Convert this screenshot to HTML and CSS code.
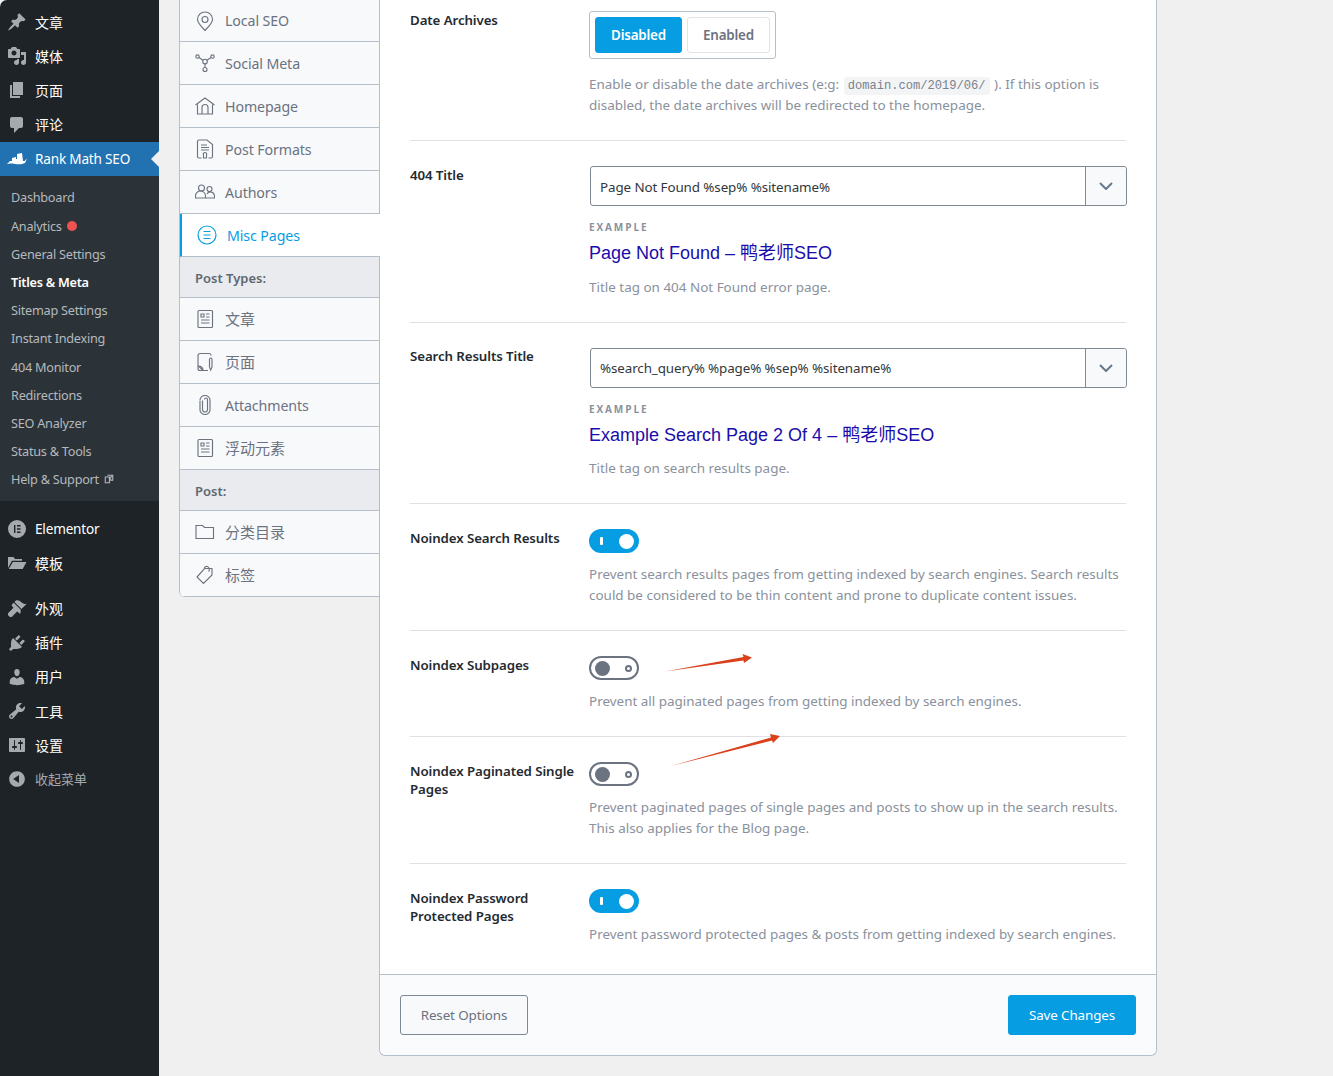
FILE: index.html
```html
<!DOCTYPE html>
<html lang="zh-CN">
<head>
<meta charset="utf-8">
<title>Titles &amp; Meta</title>
<link rel="stylesheet" href="styles.css">
</head>
<body>
<div class="app">
  <nav class="sidebar">
    <ul class="menu">
      <li class="item"><svg class="dash" viewBox="0 0 20 20"><path d="M10.44 3.02l1.82-1.82 6.36 6.35-1.83 1.82c-1.05-.68-2.48-.57-3.41.36l-.75.75c-.92.93-1.04 2.35-.35 3.41l-1.83 1.82-2.41-2.41-2.8 2.79c-.42.42-3.38 2.71-3.8 2.29s1.86-3.39 2.28-3.81l2.79-2.79L4.1 9.36l1.83-1.82c1.05.69 2.48.57 3.4-.36l.75-.75c.93-.92 1.05-2.35.36-3.41z"/></svg><span class="cjk">文章</span></li>
      <li class="item"><svg class="dash" viewBox="0 0 20 20"><path d="M13 11V4c0-.55-.45-1-1-1h-1.67L9 1H5L3.67 3H2c-.55 0-1 .45-1 1v7c0 .55.45 1 1 1h10c.55 0 1-.45 1-1zM7 4.5c1.38 0 2.5 1.12 2.5 2.5S8.38 9.5 7 9.5 4.5 8.38 4.5 7 5.62 4.5 7 4.5zM14 6h5v10.5c0 1.38-1.12 2.5-2.5 2.5S14 17.88 14 16.5s1.12-2.5 2.5-2.5c.17 0 .34.02.5.05V9h-3V6zm-4 8.05V13h2v3.5c0 1.38-1.12 2.5-2.5 2.5S7 17.88 7 16.5 8.12 14 9.5 14c.17 0 .34.02.5.05z"/></svg><span class="cjk">媒体</span></li>
      <li class="item"><svg class="dash" viewBox="0 0 20 20"><path d="M6 15V2h10v13H6zm-1 1h8v2H3V5h2v11z"/></svg><span class="cjk">页面</span></li>
      <li class="item"><svg class="dash" viewBox="0 0 20 20"><path d="M5 2h9c1.1 0 2 .9 2 2v7c0 1.1-.9 2-2 2h-2l-5 5v-5H5c-1.1 0-2-.9-2-2V4c0-1.1.9-2 2-2z"/></svg><span class="cjk">评论</span></li>
      <li class="item item-active"><svg class="dash dash-white" viewBox="0 0 20 20"><path d="M0 15l3-3h2V9l4-1v2h1V5l5-1 1 8h1.500L20 9.500 18 14c-5 2.500-10 .5-14 .5-1.500 0-3 .5-4 .5z"/></svg><span>Rank Math SEO</span></li>
    </ul>
    <ul class="submenu">
      <li>Dashboard</li>
      <li>Analytics<i class="dot"></i></li>
      <li>General Settings</li>
      <li class="sub-current">Titles &amp; Meta</li>
      <li>Sitemap Settings</li>
      <li>Instant Indexing</li>
      <li>404 Monitor</li>
      <li>Redirections</li>
      <li>SEO Analyzer</li>
      <li>Status &amp; Tools</li>
      <li>Help &amp; Support<svg class="ext" viewBox="0 0 12 12"><path d="M1.5 3.5h5v7h-5z M4 1.5h6.500v6H8V5.500M6 6l4-4M7.500 1.500h3v3"/></svg></li>
    </ul>
    <ul class="menu menu-gap">
      <li class="item"><svg class="dash" viewBox="0 0 20 20"><path fill-rule="evenodd" d="M10 1a9 9 0 1 1 0 18 9 9 0 0 1 0-18zM7 6v8h1.400V6zm3 0v1.500h3.500V6zm0 3.250v1.500h3.500v-1.500zm0 3.250V14h3.500v-1.500z"/></svg><span class="latin">Elementor</span></li>
      <li class="item"><svg class="dash" viewBox="0 0 20 20"><path d="M1 4h5.500l1.500 2h7v1.800H5L1 15zM5.800 9H19.500l-3.800 7H1.800z"/></svg><span class="cjk">模板</span></li>
    </ul>
    <ul class="menu menu-gap">
      <li class="item"><svg class="dash" viewBox="0 0 20 20"><path d="M14.480 11.060L7.410 3.990l1.500-1.500c.5-.56 2.300-.47 3.510.32 1.210.8 1.430 1.280 2.910 2.100 1.180.64 2.450 1.260 4.450.85zm-.71.71L6.700 4.700 4.930 6.470c-.39.39-.39 1.020 0 1.410l1.060 1.060c.39.39.39 1.030 0 1.420L1.500 14.800c-.8.800-.8 2.100 0 2.900l.8.800c.8.800 2.100.8 2.900 0l4.400-4.400c.39-.39 1.030-.39 1.420 0l1.060 1.060c.39.39 1.020.39 1.410 0z"/></svg><span class="cjk">外观</span></li>
      <li class="item"><svg class="dash" viewBox="0 0 20 20"><path d="M13.110 4.360L9.870 7.600 8 5.730l3.240-3.240c.35-.34 1.050-.2 1.560.32.520.51.660 1.210.310 1.550zm-8 1.770l.91-1.120 9.010 9.010-1.190.84c-.71.71-2.630 1.160-3.820 1.160H6.140L4.900 17.260c-.59.59-1.540.59-2.120 0-.59-.58-.59-1.530 0-2.120l1.240-1.240v-3.880c0-1.130.4-3.190 1.090-3.890zm7.260 3.970l3.240-3.240c.34-.35 1.040-.21 1.550.31.520.51.660 1.210.310 1.550l-3.240 3.250z"/></svg><span class="cjk">插件</span></li>
      <li class="item"><svg class="dash" viewBox="0 0 20 20"><path d="M10 9.250c-2.270 0-2.730-3.440-2.730-3.440C7 4.020 7.820 2 9.970 2c2.160 0 2.980 2.020 2.710 3.810 0 0-.41 3.440-2.680 3.440zm0 2.570L12.720 10c2.390 0 4.520 2.330 4.520 4.530v2.490s-3.650 1.130-7.240 1.130c-3.650 0-7.240-1.130-7.240-1.130v-2.490c0-2.250 1.940-4.480 4.470-4.480z"/></svg><span class="cjk">用户</span></li>
      <li class="item"><svg class="dash" viewBox="0 0 20 20"><path d="M16.680 9.770c-1.340 1.340-3.300 1.670-4.950.99l-5.410 6.520c-.99.99-2.590.99-3.580 0s-.99-2.590 0-3.570l6.520-5.420c-.68-1.650-.35-3.610.99-4.950 1.280-1.280 3.120-1.620 4.720-1.060l-2.890 2.890 2.820 2.820 2.860-2.870c.53 1.580.18 3.390-1.080 4.670zM3.810 16.210c.4.390 1.040.39 1.430 0 .4-.4.4-1.040 0-1.430-.39-.4-1.030-.4-1.430 0-.39.39-.39 1.030 0 1.430z"/></svg><span class="cjk">工具</span></li>
      <li class="item"><svg class="dash" viewBox="0 0 20 20"><path d="M18 16V4c0-.55-.45-1-1-1H3c-.55 0-1 .45-1 1v12c0 .55.45 1 1 1h14c.55 0 1-.45 1-1zM8 11h1c.55 0 1 .45 1 1s-.45 1-1 1H8v1.500c0 .28-.22.5-.5.5s-.5-.22-.5-.5V13H6c-.55 0-1-.45-1-1s.45-1 1-1h1V5.500c0-.28.22-.5.5-.5s.5.22.5.5V11zm5-2h-1c-.55 0-1-.45-1-1s.45-1 1-1h1V5.500c0-.28.22-.5.5-.5s.5.22.5.5V7h1c.55 0 1 .45 1 1s-.45 1-1 1h-1v5.500c0 .28-.22.5-.5.5s-.5-.22-.5-.5V9z"/></svg><span class="cjk">设置</span></li>
      <li class="item item-muted"><svg class="dash" viewBox="0 0 20 20"><path d="M10 2.160c4.330 0 7.840 3.510 7.840 7.840s-3.510 7.840-7.840 7.840S2.160 14.330 2.160 10 5.710 2.160 10 2.160zm2 11.720V6.120L6.180 9.970z"/></svg><span class="cjk">收起菜单</span></li>
    </ul>
  </nav>

  <main class="content">
    <ul class="tabs">
      <li class="tab tab-first"><svg class="tico" viewBox="0 0 20 20"><path d="M10 19.500c-1-1.800-7.500-6.500-7.500-11a7.500 7.500 0 0 1 15 0c0 4.500-6.500 9.200-7.500 11z"/><circle cx="10" cy="8.500" r="3"/></svg><span>Local SEO</span></li>
      <li class="tab"><svg class="tico" viewBox="0 0 20 20"><circle cx="2.500" cy="3.500" r="1.700"/><circle cx="17.500" cy="3.500" r="1.700"/><circle cx="10" cy="8.500" r="2.300"/><circle cx="10" cy="16.500" r="2"/><path d="M4 4.500L8 7.200M16 4.500L12 7.200M10 10.800v3.700"/></svg><span>Social Meta</span></li>
      <li class="tab"><svg class="tico" viewBox="0 0 20 20"><path d="M.5 9L10 2l9.500 7M2.500 8.500V18h15V8.500M7 18v-6.500a3 3 0 0 1 6 0V18"/></svg><span>Homepage</span></li>
      <li class="tab"><svg class="tico" viewBox="0 0 20 20"><path d="M6.500 19H4a1.500 1.500 0 0 1-1.500-1.500v-15A1.500 1.500 0 0 1 4 1h8l5.500 4.500v12A1.500 1.500 0 0 1 16 19h-2.500M6 6h6M6 8.500h8M6 11h8M8.500 16a1.700 1.700 0 1 1 3 0v3h-3z"/></svg><span>Post Formats</span></li>
      <li class="tab"><svg class="tico" viewBox="0 0 20 20"><circle cx="6.500" cy="6" r="3"/><circle cx="14.500" cy="7" r="2.500"/><path d="M.5 16v-1.500a5 5 0 0 1 10-1V16zM10.500 16h9v-2a4 4 0 0 0-7.500-2"/></svg><span>Authors</span></li>
      <li class="tab tab-active"><svg class="tico" viewBox="0 0 20 20"><circle cx="10" cy="10" r="9"/><path d="M6.500 6.500h7M6.500 10h7M6.500 13.500h7"/></svg><span>Misc Pages</span></li>
      <li class="tab-group">Post Types:</li>
      <li class="tab"><svg class="tico" viewBox="0 0 20 20"><rect x="3" y="1.500" width="14.500" height="17" rx="1"/><path d="M6 5h3v3H6zM11 5h3.500M11 8h3.500M6 11h8.500M6 14h8.500"/></svg><span class="cjk">文章</span></li>
      <li class="tab"><svg class="tico" viewBox="0 0 20 20"><path d="M13 18.500H5a2 2 0 0 1-2-2v-13a2 2 0 0 1 2-2h9a2 2 0 0 1 2 2M3 13.500l5 5M3 14c3 0 5 1 5 4.500M15.500 6a1.300 1.300 0 0 1 1.500 1.300V15l-1.300 3-1.200-3V7.300A1.300 1.300 0 0 1 15.500 6z"/></svg><span class="cjk">页面</span></li>
      <li class="tab"><svg class="tico" viewBox="0 0 20 20"><path d="M7.500 5.500v9a2.500 2.500 0 0 0 5 0v-10a1.500 1.500 0 0 0-3 0M5 5.500v9.500a5 4.500 0 0 0 10 0V5a5 4.500 0 0 0-10 0"/></svg><span>Attachments</span></li>
      <li class="tab"><svg class="tico" viewBox="0 0 20 20"><rect x="3" y="1.500" width="14.500" height="17" rx="1"/><path d="M6 5h3v3H6zM11 5h3.500M11 8h3.500M6 11h8.500M6 14h8.500"/></svg><span class="cjk">浮动元素</span></li>
      <li class="tab-group">Post:</li>
      <li class="tab"><svg class="tico" viewBox="0 0 20 20"><path d="M1 5V3.500h6.500L9.500 5.500h9v11H1z"/></svg><span class="cjk">分类目录</span></li>
      <li class="tab"><svg class="tico" viewBox="0 0 20 20"><path d="M9.500 3.500H17V10l-8.500 8.500L2 12zM13.500 6.500c1.500-1 1-4-1-5-1.500-.5-3 .5-3 1.500"/></svg><span class="cjk">标签</span></li>
    </ul>

    <section class="panel">
      <div class="form">
        <div class="row row-top">
          <div class="label">Date Archives</div>
          <div class="field">
            <div class="segment"><span class="seg seg-on">Disabled</span><span class="seg">Enabled</span></div>
            <p class="hint hint-seg">Enable or disable the date archives (e:g: <code class="code">domain.com/2019/06/</code> ). If this option is disabled, the date archives will be redirected to the homepage.</p>
          </div>
        </div>
        <div class="row row-title">
          <div class="label">404 Title</div>
          <div class="field">
            <div class="select"><span class="select-text">Page Not Found %sep% %sitename%</span><span class="select-btn"><svg class="chev" viewBox="0 0 14 8"><path d="M1 1l6 6 6-6"/></svg></span></div>
            <div class="ex-label">Example</div>
            <div class="ex-title">Page Not Found – 鸭老师SEO</div>
            <p class="hint hint-ex">Title tag on 404 Not Found error page.</p>
          </div>
        </div>
        <div class="row row-title">
          <div class="label">Search Results Title</div>
          <div class="field">
            <div class="select"><span class="select-text">%search_query% %page% %sep% %sitename%</span><span class="select-btn"><svg class="chev" viewBox="0 0 14 8"><path d="M1 1l6 6 6-6"/></svg></span></div>
            <div class="ex-label">Example</div>
            <div class="ex-title">Example Search Page 2 Of 4 – 鸭老师SEO</div>
            <p class="hint hint-ex">Title tag on search results page.</p>
          </div>
        </div>
        <div class="row">
          <div class="label">Noindex Search Results</div>
          <div class="field">
            <div class="toggle toggle-on"><i class="toggle-mark"></i><i class="toggle-knob"></i></div>
            <p class="hint">Prevent search results pages from getting indexed by search engines. Search results could be considered to be thin content and prone to duplicate content issues.</p>
          </div>
        </div>
        <div class="row">
          <div class="label">Noindex Subpages</div>
          <div class="field">
            <div class="toggle"><i class="toggle-knob"></i><i class="toggle-mark"></i></div>
            <p class="hint">Prevent all paginated pages from getting indexed by search engines.</p>
          </div>
        </div>
        <div class="row">
          <div class="label">Noindex Paginated Single Pages</div>
          <div class="field">
            <div class="toggle"><i class="toggle-knob"></i><i class="toggle-mark"></i></div>
            <p class="hint">Prevent paginated pages of single pages and posts to show up in the search results. This also applies for the Blog page.</p>
          </div>
        </div>
        <div class="row row-last">
          <div class="label">Noindex Password Protected Pages</div>
          <div class="field">
            <div class="toggle toggle-on"><i class="toggle-mark"></i><i class="toggle-knob"></i></div>
            <p class="hint">Prevent password protected pages &amp; posts from getting indexed by search engines.</p>
          </div>
        </div>
      </div>
      <footer class="footer">
        <button class="btn btn-reset" type="button">Reset Options</button>
        <button class="btn btn-save" type="button">Save Changes</button>
      </footer>
    </section>
  </main>
</div>
<svg class="arrows" viewBox="0 0 1333 1076"><path d="M665 671.500L743.500 657 742.500 654 752 657.500 744 663 743.500 660.500zM671 766L771 737.500 770 734 780 736 773 743 772 740.500z"/></svg>
</body>
</html>
```
FILE: styles.css
```css
* { box-sizing: border-box; }
html, body { margin: 0; padding: 0; height: 100%; overflow: hidden; }
body { background: #f0f0f1; font-family: "Noto Sans", "Noto Sans CJK SC", sans-serif; font-size: 14px; color: #1d2327; }
ul { list-style: none; margin: 0; padding: 0; }
p { margin: 0; }

.app { display: flex; width: 1333px; height: 1076px; }

/* WordPress sidebar */
.sidebar { flex: 0 0 159px; background: #1d2327; padding-top: 5px; border-top-left-radius: 7px; }
.menu-gap { margin-top: 11px; }
.item { position: relative; display: flex; align-items: center; height: 34.2px; padding-left: 7px; color: #fff; font-size: 13.6px; letter-spacing: -.2px; }
.item span { margin-left: 8px; }
.item .cjk { font-size: 14px; letter-spacing: 0; margin-top: -1px; }
.item .latin { margin-top: -1px; }
.dash { width: 20px; height: 20px; fill: #a7aaad; flex: none; }
.dash-white { fill: #fff; }
.item-active { background: #2271b1; }
.item-active::after { content: ""; position: absolute; right: 0; top: 9px; border: 8px solid transparent; border-left-width: 0; border-right-color: #f0f0f1; }
.item-muted { color: #a7aaad; }
.item-muted .cjk { font-size: 13px; }
.submenu { background: #2c3338; padding: 7.4px 0 7.6px; }
.submenu li { display: flex; align-items: center; height: 28.2px; padding-left: 11px; color: #b4b9be; font-size: 12.7px; letter-spacing: -.25px; }
.submenu .sub-current { color: #fff; font-weight: 600; }
.dot { width: 10px; height: 10px; border-radius: 50%; background: #ef5350; margin-left: 5px; }
.ext { width: 10px; height: 10px; margin-left: 5px; fill: none; stroke: #b4b9be; stroke-width: 1.300; }

/* Content */
.content { display: flex; align-items: flex-start; flex: 1; padding-left: 20px; }

.tabs { position: relative; z-index: 1; flex: 0 0 201px; margin-right: -1px; border-left: 1px solid #b5bfc9; border-bottom-left-radius: 6px; overflow: hidden; }
.tab { display: flex; align-items: center; height: 43px; padding-left: 15px; background: #f8f9fb; border-bottom: 1px solid #b5bfc9; border-right: 1px solid #b5bfc9; color: #6b7280; font-size: 14.2px; letter-spacing: -.1px; }
.tab span { margin-left: 10px; }
.tab .cjk { margin-top: -2px; font-size: 15px; letter-spacing: 0; }
.tab-first { height: 42px; }
.tico { width: 20px; height: 20px; flex: none; fill: none; stroke: #6d7480; stroke-width: 1.150; }
.tab-active { background: #fff; border-right: 0; border-left: 3px solid #069de3; margin-left: -1px; padding-left: 15px; color: #069de3; }
.tab-active .tico { stroke: #069de3; }
.tab-group { display: flex; align-items: center; height: 41px; padding: 2px 0 0 15px; background: #e9ebee; border-bottom: 1px solid #b5bfc9; border-right: 1px solid #b5bfc9; color: #5f6773; font-size: 13px; font-weight: 600; }

.panel { flex: 0 0 778px; height: 1056px; background: #fff; border: 1px solid #b5bfc9; border-top: 0; border-radius: 0 0 6px 6px; display: flex; flex-direction: column; }
.form { flex: 1; padding: 0 30px; }
.row { display: grid; grid-template-columns: 179px 1fr; padding: 25px 0 24px; border-bottom: 1px solid #dde1e6; }
.row-top { padding-top: 11px; padding-bottom: 24.5px; }
.row-title { padding-bottom: 24px; }
.row-last { border-bottom: 0; padding-bottom: 0; }
.label { font-size: 13.3px; line-height: 18px; font-weight: 600; color: #242a30; padding-right: 10px; margin-top: -.5px; letter-spacing: -.1px; }
.field { min-width: 0; }

.segment { display: inline-flex; gap: 5px; padding: 5px; border: 1px solid #b5bfc9; border-radius: 3px; height: 48px; vertical-align: top; }
.seg { display: flex; align-items: center; justify-content: center; width: 83px; height: 36px; border: 1px solid #e0e3e7; border-radius: 3px; color: #6b7280; font-size: 13.4px; font-weight: 600; letter-spacing: -.2px; }
.seg-on { width: 87px; background: #069de3; border-color: #069de3; color: #fff; }

.hint { margin-top: 11px; font-size: 13.45px; line-height: 21px; color: #8a919c; }
.hint-seg { margin-top: 14.5px; }
.hint-ex { margin-top: 11.5px; }
.code { font-family: "Liberation Mono", monospace; font-size: 12.100px; line-height: 1; background: #f2f4f6; margin: 0 1px; padding: 2px 4px; border-radius: 3px; color: #7b828d; }

.select { display: flex; height: 40px; width: 537px; margin-left: 1px; border: 1px solid #7e8993; border-radius: 3px; }
.select-text { flex: 1; display: flex; align-items: center; padding: 1px 0 0 9px; font-size: 13.400px; color: #32373c; letter-spacing: -.1px; }
.select-btn { flex: 0 0 41px; display: flex; align-items: center; justify-content: center; background: #f8f9fb; border-left: 1px solid #7e8993; border-radius: 0 3px 3px 0; }
.chev { width: 14px; height: 8px; fill: none; stroke: #66788a; stroke-width: 2; }
.ex-label { margin-top: 14px; font-size: 10px; line-height: 14px; font-weight: 700; letter-spacing: 1.900px; text-transform: uppercase; color: #8a919c; font-family: "Open Sans", sans-serif; }
.ex-title { margin-top: 7px; font-family: "Liberation Sans", "Noto Sans CJK SC", sans-serif; font-size: 18px; line-height: 24px; color: #1a0dab; }

.toggle { position: relative; display: flex; align-items: center; justify-content: space-between; width: 50px; height: 24px; padding: 0 5px 0 4px; border-radius: 12px; border: 2px solid #6b7280; background: #fff; }
.toggle-on { border-color: #069de3; background: #069de3; padding: 0 3px 0 9px; }
.toggle-knob { width: 15px; height: 15px; border-radius: 50%; background: #6b7280; }
.toggle-on .toggle-knob { background: #fff; }
.toggle-mark { width: 7px; height: 7px; border: 2px solid #6b7280; border-radius: 50%; }
.toggle-on .toggle-mark { width: 3px; height: 8px; border: 0; border-radius: 1px; background: #fff; }

.footer { display: flex; justify-content: space-between; height: 81px; padding: 20px; background: #fafbfc; border-top: 1px solid #b5bfc9; border-radius: 0 0 6px 6px; }
.btn { width: 128px; height: 40px; border-radius: 3px; font-family: inherit; font-size: 13.4px; letter-spacing: -.1px; }
.btn-reset { background: #f8f9fb; border: 1px solid #7e8993; color: #6b7280; }
.btn-save { background: #069de3; border: 1px solid #069de3; color: #fff; }

.arrows { position: fixed; left: 0; top: 0; width: 1333px; height: 1076px; fill: #d9401b; pointer-events: none; z-index: 5; }
```
